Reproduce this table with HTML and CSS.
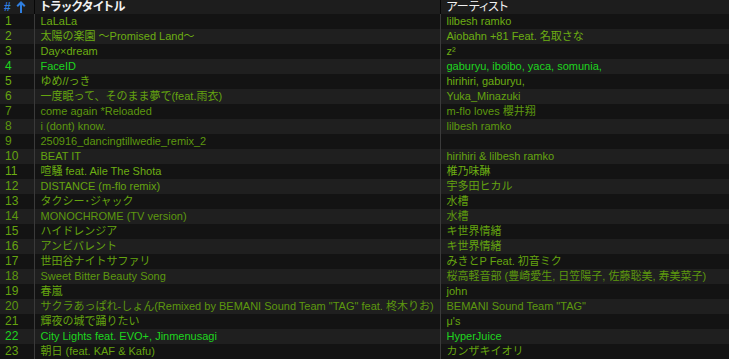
FILE: index.html
```html
<!DOCTYPE html>
<html lang="ja">
<head>
<meta charset="utf-8">
<title>Tracks</title>
<link rel="stylesheet" href="styles.css">
</head>
<body>
<table class="tracks">
  <colgroup><col class="c-num"><col class="c-title"><col class="c-artist"></colgroup>
  <thead>
    <tr>
      <th class="num"><span class="hash">#</span><svg class="arrow" width="10" height="12" viewBox="0 0 10 12"><path d="M5 1.5V12M1.2 5.3L5 1.5l3.8 3.8" fill="none" stroke="#2f7fe0" stroke-width="2"/></svg></th>
      <th class="title bold">トラックタイトル</th>
      <th class="artist">アーティスト</th>
    </tr>
  </thead>
  <tbody>
    <tr class="g1"><td class="num">1</td><td>LaLaLa</td><td>lilbesh ramko</td></tr>
    <tr class="g1"><td class="num">2</td><td>太陽の楽園 〜Promised Land〜</td><td>Aiobahn +81 Feat. 名取さな</td></tr>
    <tr class="g1"><td class="num">3</td><td>Day×dream</td><td>z²</td></tr>
    <tr class="g0"><td class="num">4</td><td>FaceID</td><td>gaburyu, iboibo, yaca, somunia,</td></tr>
    <tr class="g1"><td class="num">5</td><td>ゆめ//っき</td><td>hirihiri, gaburyu,</td></tr>
    <tr class="g2"><td class="num">6</td><td>一度眠って、そのまま夢で(feat.雨衣)</td><td>Yuka_Minazuki</td></tr>
    <tr class="g3"><td class="num">7</td><td>come again *Reloaded</td><td>m-flo loves 櫻井翔</td></tr>
    <tr class="g3"><td class="num">8</td><td>i (dont) know.</td><td>lilbesh ramko</td></tr>
    <tr class="g3"><td class="num">9</td><td>250916_dancingtillwedie_remix_2</td><td></td></tr>
    <tr class="g2"><td class="num">10</td><td>BEAT IT</td><td>hirihiri &amp; lilbesh ramko</td></tr>
    <tr class="g1"><td class="num">11</td><td>喧騒 feat. Aile The Shota</td><td>椎乃味醂</td></tr>
    <tr class="g2"><td class="num">12</td><td>DISTANCE (m-flo remix)</td><td>宇多田ヒカル</td></tr>
    <tr class="g2"><td class="num">13</td><td>タクシー･ジャック</td><td>水槽</td></tr>
    <tr class="g3"><td class="num">14</td><td>MONOCHROME (TV version)</td><td>水槽</td></tr>
    <tr class="g2"><td class="num">15</td><td>ハイドレンジア</td><td>キ世界情緒</td></tr>
    <tr class="g2"><td class="num">16</td><td>アンビバレント</td><td>キ世界情緒</td></tr>
    <tr class="g2"><td class="num">17</td><td>世田谷ナイトサファリ</td><td>みきとP Feat. 初音ミク</td></tr>
    <tr class="g3"><td class="num">18</td><td>Sweet Bitter Beauty Song</td><td>桜高軽音部 (豊崎愛生, 日笠陽子, 佐藤聡美, 寿美菜子)</td></tr>
    <tr class="g2"><td class="num">19</td><td>春嵐</td><td>john</td></tr>
    <tr class="g3"><td class="num">20</td><td>サクラあっぱれ-しょん(Remixed by BEMANI Sound Team "TAG" feat. 柊木りお)</td><td>BEMANI Sound Team "TAG"</td></tr>
    <tr class="g2"><td class="num">21</td><td>輝夜の城で踊りたい</td><td>μ's</td></tr>
    <tr class="g0"><td class="num">22</td><td>City Lights feat. EVO+, Jinmenusagi</td><td>HyperJuice</td></tr>
    <tr class="g2"><td class="num">23</td><td>朝日 (feat. KAF &amp; Kafu)</td><td>カンザキイオリ</td></tr>
  </tbody>
</table>
</body>
</html>
```
FILE: styles.css
```css
html, body {
  margin: 0;
  padding: 0;
  background: #131313;
}
.tracks {
  width: 729px;
  border-collapse: collapse;
  table-layout: fixed;
  font-family: "Liberation Sans", "Noto Sans CJK JP", sans-serif;
  font-size: 11px;
}
.c-num { width: 34px; }
.c-title { width: 406px; }
.c-artist { width: 289px; }
th, td {
  padding: 0 0 0 6px;
  text-align: left;
  white-space: nowrap;
  overflow: hidden;
  line-height: 15px;
  height: 15px;
}
thead th {
  background: #1d1d1d;
  color: #f2f2f2;
  height: 14px;
  line-height: 14px;
  font-weight: normal;
  border-left: 1px solid #070707;
  font-size: 12px;
  font-feature-settings: "palt";
}
thead th.num {
  border-left: none;
  padding-left: 4px;
}
thead th.bold { font-weight: bold; }
.hash {
  color: #2f7fe0;
  font-weight: bold;
  font-size: 12px;
}
.arrow {
  margin-left: 5px;
  vertical-align: -2px;
}
tbody td {
  border-left: 1px solid #3a3a3a;
}
tbody td.num {
  border-left: none;
  padding-left: 5px;
  font-size: 12px;
}
tbody tr:nth-child(odd) { background: #131313; }
tbody tr:nth-child(even) { background: #1f1f1f; }
.g0 { color: #1ed51e; }
.g1 { color: #6cae12; }
.g2 { color: #65a40f; }
.g3 { color: #5d980e; }
```
